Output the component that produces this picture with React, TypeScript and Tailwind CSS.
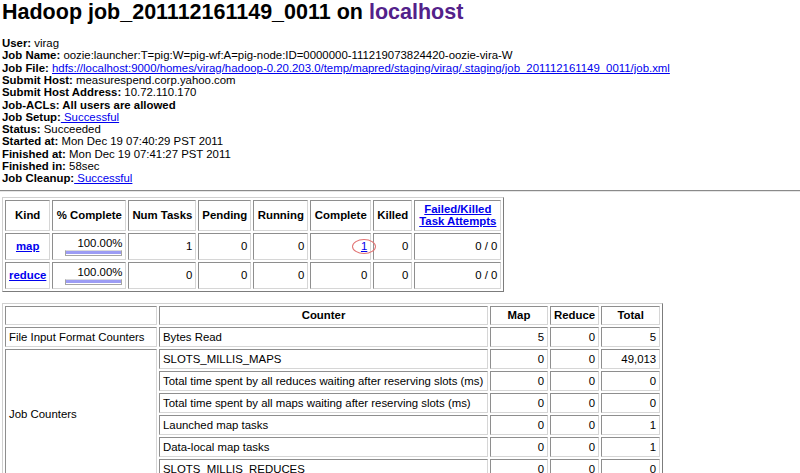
import React from "react";

const cell =
  "border border-solid border-t-[#8e8e8e] border-l-[#8e8e8e] border-b-[#d6d6d6] border-r-[#d6d6d6] px-[3px] py-0 align-middle";
const tbl =
  "border-separate border-spacing-[2px] border border-solid border-t-[#d0d0d0] border-l-[#d0d0d0] border-b-[#7c7c7c] border-r-[#7c7c7c]";
const link = "text-[#0000ee] underline";

function Info({ label, children }: { label: string; children?: React.ReactNode }) {
  return (
    <div>
      <b>{label}</b>
      {children}
    </div>
  );
}

function Bar() {
  return (
    <div className="ml-auto mt-[1px] w-[57px] h-[6px] border border-solid border-[#a4a4a4] border-t-[#dadada] bg-white">
      <div className="h-[3px] bg-[#9c9cf4]" />
    </div>
  );
}

const counters: { group?: string; span?: number; name: string; map: string; reduce: string; total: string }[] = [
  { group: "File Input Format Counters", span: 1, name: "Bytes Read", map: "5", reduce: "0", total: "5" },
  { group: "Job Counters", span: 6, name: "SLOTS_MILLIS_MAPS", map: "0", reduce: "0", total: "49,013" },
  { name: "Total time spent by all reduces waiting after reserving slots (ms)", map: "0", reduce: "0", total: "0" },
  { name: "Total time spent by all maps waiting after reserving slots (ms)", map: "0", reduce: "0", total: "0" },
  { name: "Launched map tasks", map: "0", reduce: "0", total: "1" },
  { name: "Data-local map tasks", map: "0", reduce: "0", total: "1" },
  { name: "SLOTS_MILLIS_REDUCES", map: "0", reduce: "0", total: "0" },
];

export default function App() {
  return (
    <div className="h-[473px] overflow-hidden bg-white text-black pl-[2px] font-['Liberation_Sans',Arial,Helvetica,sans-serif]">
      <h1 className="m-0 text-[21.5px] leading-[24px] font-bold">
        Hadoop job_201112161149_0011 on <span className="text-[#53218a]">localhost</span>
      </h1>

      <div className="mt-[13.2px] text-[11.4px] leading-[12.27px]">
        <Info label="User:"> virag</Info>
        <Info label="Job Name:"> oozie:launcher:T=pig:W=pig-wf:A=pig-node:ID=0000000-111219073824420-oozie-vira-W</Info>
        <Info label="Job File:">
          {" "}
          <a className={link}>
            hdfs://localhost:9000/homes/virag/hadoop-0.20.203.0/temp/mapred/staging/virag/.staging/job_201112161149_0011/job.xml
          </a>
        </Info>
        <Info label="Submit Host:"> measurespend.corp.yahoo.com</Info>
        <Info label="Submit Host Address:"> 10.72.110.170</Info>
        <Info label="Job-ACLs: All users are allowed" />
        <Info label="Job Setup:">
          <a className={link}>{" Successful"}</a>
        </Info>
        <Info label="Status:"> Succeeded</Info>
        <Info label="Started at:"> Mon Dec 19 07:40:29 PST 2011</Info>
        <Info label="Finished at:"> Mon Dec 19 07:41:27 PST 2011</Info>
        <Info label="Finished in:"> 58sec</Info>
        <Info label="Job Cleanup:">
          <a className={link}>{" Successful"}</a>
        </Info>
      </div>

      <div className="-ml-[2px] mt-[5.6px] border-t border-b border-solid border-t-[#8a8a8a] border-b-[#e6e6e6]" />

      <table className={`${tbl} mt-[5px] text-[11.4px] leading-[12.27px]`}>
        <thead>
          <tr className="font-bold text-center">
            <th className={`${cell} w-[45px] h-[31px]`}>Kind</th>
            <th className={`${cell} w-[74px]`}>% Complete</th>
            <th className={`${cell} w-[68px]`}>Num Tasks</th>
            <th className={`${cell} w-[52px]`}>Pending</th>
            <th className={`${cell} w-[55px]`}>Running</th>
            <th className={`${cell} w-[61px]`}>Complete</th>
            <th className={`${cell} w-[38px]`}>Killed</th>
            <th className={`${cell} w-[87px]`}>
              <a className={link}>
                Failed/Killed
                <br />
                Task Attempts
              </a>
            </th>
          </tr>
        </thead>
        <tbody>
          {[
            { kind: "map", tasks: "1", complete: "1" },
            { kind: "reduce", tasks: "0", complete: "0" },
          ].map((r) => (
            <tr key={r.kind} className="text-right">
              <td className={`${cell} h-[27px] text-center font-bold`}>
                <a className={link}>{r.kind}</a>
              </td>
              <td className={cell}>
                <div>100.00%</div>
                <Bar />
              </td>
              <td className={cell}>{r.tasks}</td>
              <td className={cell}>0</td>
              <td className={cell}>0</td>
              <td className={cell}>
                {r.complete === "1" ? (
                  <span className="relative inline-block">
                    <a className={link}>1</a>
                    <span className="absolute left-[-9px] top-[-1.5px] w-[24px] h-[15px] rounded-[50%] border border-solid border-[#e27474]" />
                  </span>
                ) : (
                  r.complete
                )}
              </td>
              <td className={cell}>0</td>
              <td className={cell}>0 / 0</td>
            </tr>
          ))}
        </tbody>
      </table>

      <table className={`${tbl} mt-[11px] text-[11.4px] leading-[12.27px]`}>
        <thead>
          <tr className="font-bold text-center">
            <th className={`${cell} w-[152px] h-[19px]`}></th>
            <th className={`${cell} w-[329px]`}>Counter</th>
            <th className={`${cell} w-[58px]`}>Map</th>
            <th className={`${cell} w-[49px]`}>Reduce</th>
            <th className={`${cell} w-[59px]`}>Total</th>
          </tr>
        </thead>
        <tbody>
          {counters.map((c) => (
            <tr key={c.name}>
              {c.group && (
                <td rowSpan={c.span} className={`${cell} text-left`}>
                  {c.group}
                </td>
              )}
              <td className={`${cell} h-[20px] text-left`}>{c.name}</td>
              <td className={`${cell} text-right`}>{c.map}</td>
              <td className={`${cell} text-right`}>{c.reduce}</td>
              <td className={`${cell} text-right`}>{c.total}</td>
            </tr>
          ))}
        </tbody>
      </table>
    </div>
  );
}
